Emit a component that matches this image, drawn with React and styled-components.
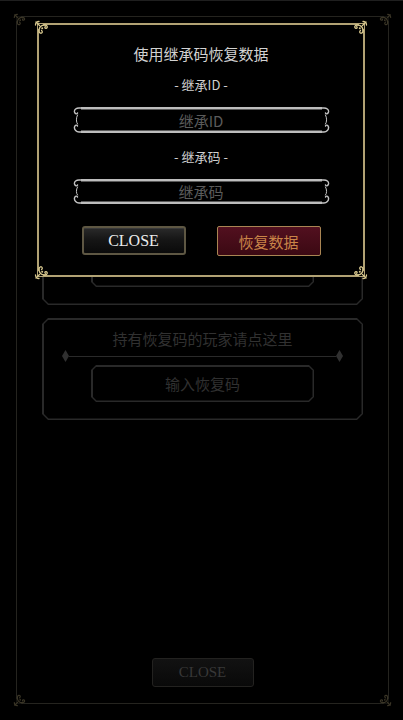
import React from "react";
import styled, { createGlobalStyle, css } from "styled-components";

const GlobalStyle = createGlobalStyle`
  html, body { margin: 0; padding: 0; background: #000; }
  body { font-family: "Noto Sans CJK SC", "Noto Sans", sans-serif; }
  * { box-sizing: border-box; }
`;

const CJK = `"Noto Sans CJK SC", "Noto Sans", sans-serif`;
const SERIF = `"Liberation Serif", "Noto Sans CJK SC", serif`;

/* ---------- shared ---------- */

const chamfer = (c) => `polygon(${c}px 0, calc(100% - ${c}px) 0, 100% ${c}px, 100% calc(100% - ${c}px), calc(100% - ${c}px) 100%, ${c}px 100%, 0 calc(100% - ${c}px), 0 ${c}px)`;

const ChamferBox = styled.div`
  position: relative;
  height: ${(p) => (p.$fill ? "100%" : "auto")};
  background: ${(p) => p.$line};
  clip-path: ${(p) => chamfer(p.$c)};
  &::before {
    content: "";
    position: absolute;
    inset: ${(p) => p.$w}px;
    background: #000;
    clip-path: ${(p) => chamfer(p.$c - 1)};
  }
  & > * { position: relative; }
`;

const CornerSvg = styled.svg`
  position: absolute;
  width: ${(p) => p.$size}px;
  height: ${(p) => p.$size}px;
  color: ${(p) => p.$color};
  ${(p) => p.$pos === "tl" && css`top: ${p.$off}px; left: ${p.$off}px;`}
  ${(p) => p.$pos === "tr" && css`top: ${p.$off}px; right: ${p.$off}px; transform: scaleX(-1);`}
  ${(p) => p.$pos === "bl" && css`bottom: ${p.$off}px; left: ${p.$off}px; transform: scaleY(-1);`}
  ${(p) => p.$pos === "br" && css`bottom: ${p.$off}px; right: ${p.$off}px; transform: scale(-1, -1);`}
`;

const Corner = ({ pos, color, size = 16, off = -5 }) => (
  <CornerSvg $pos={pos} $color={color} $size={size} $off={off} viewBox="0 0 16 16" fill="none" stroke="currentColor" strokeWidth="1.3" strokeLinecap="round">
    <rect x="4" y="4" width="5" height="5" fill="#000" stroke="none" />
    <path d="M5 11 C5 7 7 5 11 5" />
    <path d="M11 5 c2.6 0 3 3 1 3.3 c-1.2 0.1 -1.6 -1.2 -0.6 -1.6" />
    <path d="M5 11 c0 2.6 3 3 3.3 1 c0.1 -1.2 -1.2 -1.6 -0.6 -1.6" />
    <path d="M2 2 L5.5 5.5" />
    <path d="M1.5 5 c0 -2 1.5 -3.5 3.5 -3.5" />
    <circle cx="8.2" cy="8.2" r="1" fill="currentColor" stroke="none" />
  </CornerSvg>
);

/* ---------- background screen (dimmed) ---------- */

const Stage = styled.div`
  position: relative;
  width: 403px;
  height: 720px;
  overflow: hidden;
  background: #000;
  box-shadow: inset 0 1px 0 #1f1f1f;
  padding: 16px 14px 16px 16px;
`;

const Frame = styled.div`
  position: relative;
  height: 688px;
  border: 1px solid #25241f;
  padding: 186px 25px 16px 25px;
  display: flex;
  flex-direction: column;
  gap: 13px;
`;

const PanelInner = styled.div`
  height: 102px;
  padding: 11px 20px 18px;
  display: flex;
  flex-direction: column;
  align-items: center;
`;

const DimText = styled.div`
  min-height: 20px;
  font-family: ${CJK};
  font-size: 15px;
  line-height: 20px;
  color: #313131;
  white-space: nowrap;
`;

const Divider = styled.div`
  align-self: stretch;
  height: 14px;
  display: flex;
  align-items: center;
`;

const Diamond = styled.div`
  width: 7px;
  height: 12px;
  background: #303030;
  clip-path: polygon(50% 0, 100% 50%, 50% 100%, 0 50%);
  flex: none;
`;

const DividerLine = styled.div`
  flex: 1;
  height: 1px;
  background: #2a2a2a;
`;

const DimButtonWrap = styled.div`
  width: 223px;
  height: 37px;
  margin-top: 2px;
`;

const DimButtonInner = styled.div`
  height: 100%;
  display: flex;
  align-items: center;
  justify-content: center;
  font-family: ${CJK};
  font-size: 15px;
  color: #303030;
`;

const BottomClose = styled.div`
  margin-top: auto;
  align-self: center;
  width: 102px;
  height: 29px;
  border: 1.5px solid #232220;
  border-radius: 3px;
  background: linear-gradient(#121212, #090909);
  display: flex;
  align-items: center;
  justify-content: center;
  font-family: ${SERIF};
  font-size: 15px;
  line-height: 1;
  color: #383838;
`;

const Panel = ({ text, button }) => (
  <ChamferBox $line="#292929" $c={6} $w={1.5}>
    <PanelInner>
      <DimText>{text}</DimText>
      <Divider>
        <Diamond />
        <DividerLine />
        <Diamond />
      </Divider>
      <DimButtonWrap>
        <ChamferBox $line="#292929" $c={5} $w={1.5} $fill>
          <DimButtonInner>{button}</DimButtonInner>
        </ChamferBox>
      </DimButtonWrap>
    </PanelInner>
  </ChamferBox>
);

/* ---------- modal ---------- */

const Overlay = styled.div`
  position: absolute;
  inset: 0;
  padding: 23px 38px 0 37px;
`;

const ModalBox = styled.div`
  position: relative;
  height: 254px;
  background: #000;
  border: 2px solid #b1a274;
  padding-top: 19px;
  display: flex;
  flex-direction: column;
  align-items: center;
`;

const Title = styled.div`
  font-family: ${CJK};
  font-size: 15px;
  line-height: 20px;
  color: #d2d2d2;
  margin-bottom: 11px;
`;

const Fields = styled.div`
  display: flex;
  flex-direction: column;
  align-items: center;
  gap: 14px;
`;

const Field = styled.div`
  display: flex;
  flex-direction: column;
  align-items: center;
  gap: 12px;
`;

const Label = styled.div`
  font-family: ${CJK};
  font-size: 13px;
  line-height: 20px;
  color: #d0d0d0;
  white-space: pre;
`;

const InputShell = styled.div`
  position: relative;
  width: 257px;
  height: ${(p) => p.$h}px;
  display: flex;
  align-items: stretch;
`;

const InputMid = styled.div`
  flex: 1;
  border-top: 2px solid #bdbdbd;
  border-bottom: 2px solid #bdbdbd;
  box-shadow: inset 0 1px 0 #5a5a5a, inset 0 -1px 0 #5a5a5a;
  display: flex;
`;

const TextInput = styled.input`
  flex: 1;
  min-width: 0;
  background: transparent;
  border: none;
  outline: none;
  text-align: center;
  font-family: ${CJK};
  font-size: 15px;
  color: #ddd;
  padding: 0;
  &::placeholder { color: #5b5b5b; }
`;

const EndSvg = styled.svg`
  width: 8px;
  flex: none;
  color: #c4c4c4;
  ${(p) => p.$right && css`transform: scaleX(-1);`}
`;

const InputEnd = ({ right, h }) => (
  <EndSvg $right={right} height={h} viewBox={`0 0 8 ${h}`} fill="none" stroke="currentColor" strokeWidth="1.4" strokeLinecap="round" preserveAspectRatio="none">
    <path d="M8 1 H6 C3.5 1 1 2.5 1.5 5 C2 7 4 7.5 4.5 6" />
    <path d={`M8 ${h - 1} H6 C3.5 ${h - 1} 1 ${h - 3.5} 1.5 ${h - 6} C2 ${h - 8} 4 ${h - 8.5} 4.5 ${h - 7}`} />
    <path d={`M4.5 8 C3 ${h / 2 - 2} 3 ${h / 2 + 2} 4.5 ${h - 9}`} strokeWidth="1" />
  </EndSvg>
);

const FancyInput = ({ placeholder, h }) => (
  <InputShell $h={h}>
    <InputEnd h={h} />
    <InputMid>
      <TextInput placeholder={placeholder} />
    </InputMid>
    <InputEnd h={h} right />
  </InputShell>
);

const ButtonRow = styled.div`
  margin-top: 22px;
  display: flex;
  gap: 31px;
`;

const BaseButton = styled.button`
  width: 104px;
  height: 29px;
  padding: 0;
  display: flex;
  align-items: center;
  justify-content: center;
  font-size: 15px;
  line-height: 1;
  cursor: pointer;
`;

const CloseButton = styled(BaseButton)`
  background: linear-gradient(#2a2a2a 0%, #161616 45%, #0a0a0a 100%);
  border: 2px solid #5e5743;
  border-radius: 3px;
  box-shadow: inset 0 1px 0 #3a3a3a;
  font-family: ${SERIF};
  font-size: 16px;
  color: #ececec;
`;

const RestoreButton = styled(BaseButton)`
  height: 30px;
  background: linear-gradient(#52101f, #3b0913);
  border: 1.5px solid #a98553;
  border-radius: 2px;
  font-family: ${CJK};
  color: #c98448;
`;

export default function App() {
  return (
    <>
      <GlobalStyle />
      <Stage>
        <Frame>
          <Corner pos="tl" color="#3a3526" size={14} off={-4} />
          <Corner pos="tr" color="#3a3526" size={14} off={-4} />
          <Corner pos="bl" color="#3a3526" size={14} off={-4} />
          <Corner pos="br" color="#3a3526" size={14} off={-4} />
          <Panel text="" button="" />
          <Panel text="持有恢复码的玩家请点这里" button="输入恢复码" />
          <BottomClose>CLOSE</BottomClose>
        </Frame>

        <Overlay>
          <ModalBox>
            <Corner pos="tl" color="#d8c88f" />
            <Corner pos="tr" color="#d8c88f" />
            <Corner pos="bl" color="#d8c88f" />
            <Corner pos="br" color="#d8c88f" />
            <Title>使用继承码恢复数据</Title>
            <Fields>
              <Field>
                <Label>- 继承ID -</Label>
                <FancyInput placeholder="继承ID" h={26} />
              </Field>
              <Field>
                <Label>- 继承码 -</Label>
                <FancyInput placeholder="继承码" h={25} />
              </Field>
            </Fields>
            <ButtonRow>
              <CloseButton>CLOSE</CloseButton>
              <RestoreButton>恢复数据</RestoreButton>
            </ButtonRow>
          </ModalBox>
        </Overlay>
      </Stage>
    </>
  );
}
